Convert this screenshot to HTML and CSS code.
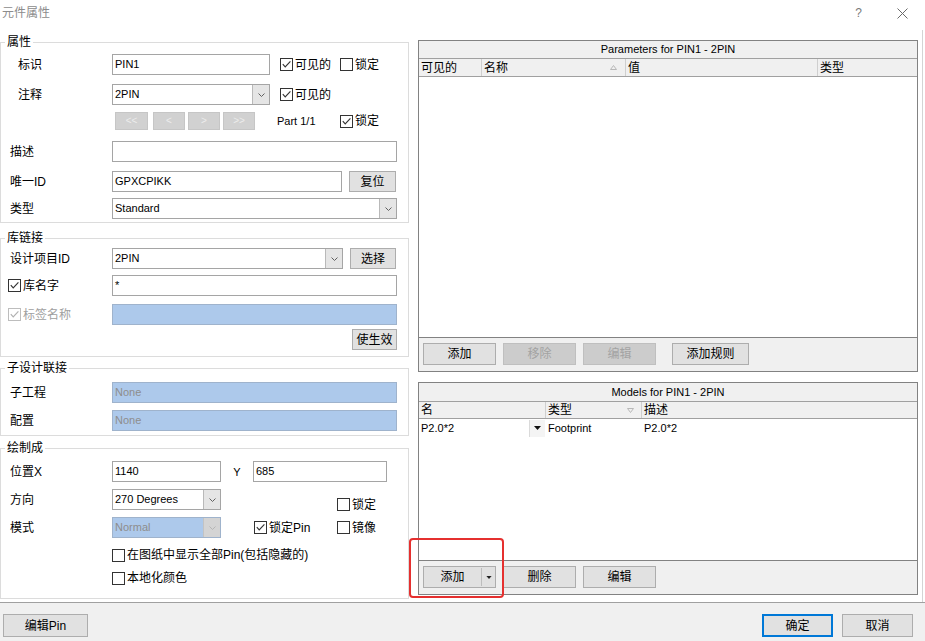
FILE: index.html
```html
<!DOCTYPE html>
<html lang="zh-CN">
<head>
<meta charset="utf-8">
<title>元件属性</title>
<link rel="stylesheet" href="styles.css">
</head>
<body>
<svg class="defs" width="0" height="0" aria-hidden="true">
  <defs>
    <symbol id="tick" viewBox="0 0 11 11"><polyline points="1.8,5.2 4.2,7.8 9.4,2.4" fill="none" stroke="currentColor" stroke-width="1.15"/></symbol>
    <symbol id="chev" viewBox="0 0 7 4"><polyline points="0.5,0.5 3.5,3.5 6.5,0.5" fill="none" stroke="currentColor" stroke-width="1"/></symbol>
    <symbol id="tri" viewBox="0 0 7 4"><polygon points="0,0 7,0 3.5,4" fill="currentColor"/></symbol>
    <symbol id="sortup" viewBox="0 0 7 5"><polygon points="3.5,0.5 6.5,4.5 0.5,4.5" fill="none" stroke="currentColor" stroke-width="1"/></symbol>
    <symbol id="sortdn" viewBox="0 0 7 5"><polygon points="0.5,0.5 6.5,0.5 3.5,4.5" fill="none" stroke="currentColor" stroke-width="1"/></symbol>
  </defs>
</svg>
<div class="dialog">
  <header class="titlebar">
    <span class="title">元件属性</span>
    <span class="help">?</span>
    <svg class="close" width="11" height="11" viewBox="0 0 11 11"><path d="M0.5 0.5L10.5 10.5M10.5 0.5L0.5 10.5" fill="none" stroke="#6a6a6a" stroke-width="1"/></svg>
  </header>

  <div class="main">
    <div class="left">
      <fieldset class="group g1">
        <legend>属性</legend>
        <div class="row mt4">
          <span class="lbl ind">标识</span>
          <span class="field w158">PIN1</span>
          <span class="cb cb-a"><span class="chk"><svg><use href="#tick"/></svg></span>可见的</span>
          <span class="cb"><span class="chk"></span>锁定</span>
        </div>
        <div class="row mt9">
          <span class="lbl ind">注释</span>
          <span class="combo w158"><span class="val">2PIN</span><span class="dd"><svg><use href="#chev"/></svg></span></span>
          <span class="cb cb-a"><span class="chk"><svg><use href="#tick"/></svg></span>可见的</span>
        </div>
        <div class="row short mt7">
          <span class="lbl"></span>
          <span class="btn nav n1">&lt;&lt;</span>
          <span class="btn nav n2">&lt;</span>
          <span class="btn nav n3">&gt;</span>
          <span class="btn nav n4">&gt;&gt;</span>
          <span class="part">Part 1/1</span>
          <span class="cb"><span class="chk"><svg><use href="#tick"/></svg></span>锁定</span>
        </div>
        <div class="row mt11">
          <span class="lbl">描述</span>
          <span class="field w285"></span>
        </div>
        <div class="row mt9">
          <span class="lbl">唯一ID</span>
          <span class="field w230">GPXCPIKK</span>
          <span class="btn b-reset">复位</span>
        </div>
        <div class="row mt6">
          <span class="lbl">类型</span>
          <span class="combo w285"><span class="val">Standard</span><span class="dd"><svg><use href="#chev"/></svg></span></span>
        </div>
      </fieldset>

      <fieldset class="group g2">
        <legend>库链接</legend>
        <div class="row mt2">
          <span class="lbl">设计项目ID</span>
          <span class="combo w231"><span class="val">2PIN</span><span class="dd"><svg><use href="#chev"/></svg></span></span>
          <span class="btn b-sel">选择</span>
        </div>
        <div class="row cbrow mt6">
          <span class="cb lbl"><span class="chk"><svg><use href="#tick"/></svg></span>库名字</span>
          <span class="field w285">*</span>
        </div>
        <div class="row cbrow mt8">
          <span class="cb lbl dim"><span class="chk"><svg><use href="#tick"/></svg></span>标签名称</span>
          <span class="field blue w285"></span>
        </div>
        <div class="row end mt4">
          <span class="btn b-apply">使生效</span>
        </div>
      </fieldset>

      <fieldset class="group g3">
        <legend>子设计联接</legend>
        <div class="row mt6">
          <span class="lbl">子工程</span>
          <span class="field blue w285">None</span>
        </div>
        <div class="row mt7">
          <span class="lbl">配置</span>
          <span class="field blue w285">None</span>
        </div>
      </fieldset>

      <fieldset class="group g4">
        <legend>绘制成</legend>
        <div class="row mt5">
          <span class="lbl">位置X</span>
          <span class="field w109">1140</span>
          <span class="ylbl">Y</span>
          <span class="field w134">685</span>
        </div>
        <div class="row mt7">
          <span class="lbl">方向</span>
          <span class="combo w109"><span class="val">270 Degrees</span><span class="dd"><svg><use href="#chev"/></svg></span></span>
          <span class="cb cb-lock"><span class="chk"></span>锁定</span>
        </div>
        <div class="row mt7">
          <span class="lbl">模式</span>
          <span class="combo dis w109"><span class="val">Normal</span><span class="dd"><svg><use href="#chev"/></svg></span></span>
          <span class="cb cb-pin"><span class="chk"><svg><use href="#tick"/></svg></span>锁定Pin</span>
          <span class="cb"><span class="chk"></span>镜像</span>
        </div>
        <div class="row opt mt9">
          <span class="cb"><span class="chk"></span>在图纸中显示全部Pin(包括隐藏的)</span>
        </div>
        <div class="row opt mt7">
          <span class="cb"><span class="chk"></span>本地化颜色</span>
        </div>
      </fieldset>
    </div>

    <div class="right">
      <section class="panel p-params">
        <div class="ptitle">Parameters for PIN1 - 2PIN</div>
        <div class="cols">
          <span class="col c-vis">可见的</span>
          <span class="col c-name">名称<svg class="sort"><use href="#sortup"/></svg></span>
          <span class="col c-val">值</span>
          <span class="col last">类型</span>
        </div>
        <div class="plist"></div>
        <div class="pbar">
          <span class="btn pb">添加</span>
          <span class="btn pb dis">移除</span>
          <span class="btn pb dis">编辑</span>
          <span class="btn pb wide">添加规则</span>
        </div>
      </section>

      <section class="panel p-models">
        <div class="ptitle">Models for PIN1 - 2PIN</div>
        <div class="cols">
          <span class="col m-name">名</span>
          <span class="col m-type">类型<svg class="sort"><use href="#sortdn"/></svg></span>
          <span class="col last">描述</span>
        </div>
        <div class="plist">
          <div class="mrow">
            <span class="cell m-name">P2.0*2<span class="rdd"><svg><use href="#tri"/></svg></span></span>
            <span class="cell m-type">Footprint</span>
            <span class="cell last">P2.0*2</span>
          </div>
        </div>
        <div class="pbar">
          <span class="btn pb split"><span class="sp-main">添加</span><span class="sp-arrow"><svg><use href="#tri"/></svg></span></span>
          <span class="btn pb">删除</span>
          <span class="btn pb">编辑</span>
        </div>
      </section>
    </div>
  </div>

  <footer class="footer">
    <span class="btn fbtn b-pin">编辑Pin</span>
    <span class="btn fbtn ok">确定</span>
    <span class="btn fbtn cancel">取消</span>
  </footer>

  <div class="annot"></div>
</div>
</body>
</html>
```

FILE: styles.css
```css
* { box-sizing: border-box; }
html, body { margin: 0; padding: 0; }
body {
  width: 925px;
  height: 641px;
  overflow: hidden;
  background: #fff;
  color: #000;
  font-family: "Liberation Sans", "Noto Sans CJK SC", sans-serif;
  font-size: 12px;
  line-height: 16px;
}
.defs { position: absolute; width: 0; height: 0; overflow: hidden; }

.dialog {
  position: relative;
  width: 925px;
  height: 641px;
  display: flex;
  flex-direction: column;
}

/* title bar */
.titlebar {
  flex: none;
  height: 30px;
  display: flex;
  align-items: center;
  padding: 0 17px 4px 2px;
}
.title { color: #8c8c8c; }
.help { margin-left: auto; color: #7a7a7a; }
.close { margin-left: 35px; display: block; }

/* main area */
.main {
  flex: none;
  display: flex;
  width: 923px;
  height: 572px;
  border-right: 1px solid #d4d4d4;
}
.left { flex: none; width: 409px; padding-top: 4px; }
.right {
  flex: none;
  width: 500px;
  margin-left: 9px;
  padding-top: 10px;
  display: flex;
  flex-direction: column;
}

/* group boxes */
.group {
  margin: 0;
  padding: 0;
  min-width: 0;
  border: 1px solid #dcdcdc;
}
.group legend { margin-left: 4px; padding: 0 2px; line-height: 16px; }
.g1 { padding-bottom: 3px; }
.g2 { margin-top: 7px; padding-bottom: 6px; }
.g3 { margin-top: 3px; padding-bottom: 4px; }
.g4 { margin-top: 4px; padding-bottom: 12px; }

/* rows */
.row {
  display: flex;
  align-items: center;
  height: 21px;
  padding-left: 9px;
  white-space: nowrap;
}
.row.short { height: 18px; }
.row.opt { height: 16px; padding-left: 111px; }
.row.cbrow { padding-left: 7px; }
.row.end { justify-content: flex-end; padding-right: 11px; }
.mt2 { margin-top: 2px; }
.mt4 { margin-top: 4px; }
.mt5 { margin-top: 5px; }
.mt6 { margin-top: 6px; }
.mt7 { margin-top: 7px; }
.mt8 { margin-top: 8px; }
.mt9 { margin-top: 9px; }
.mt11 { margin-top: 11px; }

.lbl { flex: none; width: 102px; }
.lbl.ind { padding-left: 8px; }
.cbrow .lbl { width: 104px; }

/* text fields */
.field {
  flex: none;
  height: 21px;
  border: 1px solid #a5a5a5;
  background: #fff;
  padding: 0 2px;
  font-size: 11px;
  line-height: 18px;
  overflow: hidden;
}
.field.blue { background: #adc9eb; border-color: #9fb3cc; color: #8d8d8d; }
.w109 { width: 109px; }
.w134 { width: 134px; }
.w158 { width: 158px; }
.w230 { width: 230px; }
.w231 { width: 231px; }
.w285 { width: 285px; }

/* combo boxes */
.combo {
  flex: none;
  display: flex;
  height: 21px;
  border: 1px solid #a5a5a5;
  background: #fff;
}
.combo .val {
  flex: 1;
  padding-left: 2px;
  font-size: 11px;
  line-height: 18px;
  overflow: hidden;
}
.combo .dd {
  flex: none;
  width: 17px;
  border-left: 1px solid #b9b9b9;
  background: #e5e5e5;
  display: flex;
  align-items: center;
  justify-content: center;
  color: #606060;
}
.combo .dd svg { display: block; width: 7px; height: 4px; }
.combo.dis { background: #adc9eb; border-color: #9fb3cc; }
.combo.dis .val { color: #8d8d8d; }
.combo.dis .dd { background: #d4d4d4; border-left-color: #c3c3c3; color: #b5b5b5; }

/* buttons */
.btn {
  flex: none;
  display: flex;
  align-items: center;
  justify-content: center;
  height: 21px;
  border: 1px solid #adadad;
  background: #e1e1e1;
}
.btn.dis { background: #cccccc; border-color: #bfbfbf; color: #a3a3a3; }
.nav { height: 18px; background: #d1d1d1; border-color: #c6c6c6; color: #ececec; font-size: 10px; }
.n1 { margin-left: 3px; width: 33px; }
.n2 { margin-left: 5px; width: 32px; }
.n3, .n4 { margin-left: 3px; width: 32px; }
.part { flex: none; width: 63px; margin-left: 22px; font-size: 11px; }
.b-reset { margin-left: 7px; width: 47px; }
.b-sel { margin-left: 7px; width: 46px; }
.b-apply { width: 45px; }

/* checkboxes */
.cb { flex: none; display: flex; align-items: center; }
.chk {
  flex: none;
  width: 13px;
  height: 13px;
  border: 1px solid #333;
  background: #fff;
  margin-right: 2px;
  color: #333;
}
.chk svg { display: block; width: 11px; height: 11px; }
.cb.dim { color: #a0a0a0; }
.cb.dim .chk { border-color: #bdbdbd; color: #b0b0b0; }
.cb-a { width: 60px; margin-left: 10px; }
.cb-lock { margin-left: 116px; margin-top: 10px; }
.cb-pin { width: 83px; margin-left: 33px; }
.ylbl { flex: none; width: 32px; text-align: center; font-size: 11px; }

/* list panels */
.panel {
  flex: none;
  display: flex;
  flex-direction: column;
  border: 1px solid #828282;
}
.p-params { height: 332px; }
.p-models { height: 213px; margin-top: 10px; }
.ptitle {
  flex: none;
  height: 18px;
  background: #f0f0f0;
  border-bottom: 1px solid #a0a0a0;
  text-align: center;
  font-size: 11px;
  line-height: 17px;
}
.p-models .ptitle { height: 19px; line-height: 18px; }
.cols {
  flex: none;
  display: flex;
  height: 18px;
  background: #f0f0f0;
  border-bottom: 1px solid #a0a0a0;
}
.p-models .cols { height: 17px; }
.col {
  flex: none;
  display: flex;
  align-items: center;
  padding-left: 2px;
  border-right: 1px solid #cfcfcf;
}
.col.last { flex: 1; border-right: 0; }
.c-vis { width: 63px; }
.c-name { width: 144px; }
.c-val { width: 192px; }
.m-name { width: 127px; }
.m-type { width: 96px; }
.sort { flex: none; width: 7px; height: 5px; margin-left: auto; margin-right: 8px; color: #b8b8b8; }
.m-type .sort { margin-right: 7px; }
.plist { flex: 1; background: #fff; }
.mrow { display: flex; height: 18px; }
.cell {
  flex: none;
  display: flex;
  align-items: center;
  padding-left: 2px;
  font-size: 11px;
}
.cell.last { flex: 1; }
.rdd {
  flex: none;
  margin-left: auto;
  margin-right: 1px;
  width: 16px;
  height: 17px;
  background: #f4f4f4;
  border-left: 1px solid #dadada;
  display: flex;
  align-items: center;
  justify-content: center;
  color: #111;
}
.rdd svg { display: block; width: 7px; height: 4px; }
.pbar {
  flex: none;
  display: flex;
  height: 34px;
  border-top: 1px solid #828282;
  background: #f0f0f0;
  padding: 5px 0 0 4px;
}
.pb { width: 73px; height: 22px; margin-right: 7px; }
.pb.wide { width: 77px; margin-left: 9px; }
.split { justify-content: flex-start; }
.sp-main { flex: none; width: 57px; text-align: center; }
.sp-arrow {
  flex: none;
  width: 14px;
  height: 18px;
  border-left: 1px solid #bdbdbd;
  display: flex;
  align-items: center;
  justify-content: center;
  color: #222;
}
.sp-arrow svg { display: block; width: 6px; height: 3px; }

/* footer */
.footer {
  flex: none;
  height: 39px;
  display: flex;
  align-items: flex-start;
  padding: 11px 12px 0 3px;
  border-top: 1px solid #a0a0a0;
  background: #f0f0f0;
}
.fbtn { height: 23px; }
.b-pin { width: 85px; }
.ok { margin-left: auto; width: 71px; border: 2px solid #0078d7; }
.cancel { margin-left: 9px; width: 71px; }

/* red annotation frame drawn over the screenshot */
.annot {
  position: absolute;
  left: 409px;
  top: 538px;
  width: 95px;
  height: 60px;
  border: 2px solid #e5302f;
  border-radius: 4px;
}
```
